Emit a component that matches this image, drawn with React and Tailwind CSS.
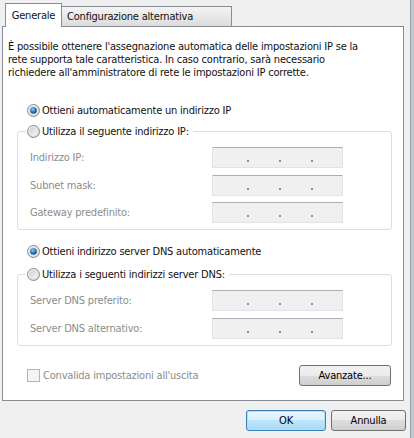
import React from 'react';

const font = { fontFamily: '"DejaVu Sans Condensed", "DejaVu Sans", Tahoma, sans-serif', fontStretch: 'condensed' };

function Radio({ checked }) {
  return (
    <svg width="13" height="13" viewBox="0 0 13 13" className="shrink-0">
      <defs>
        <linearGradient id="ro" x1="0" y1="0" x2="1" y2="1">
          <stop offset="0" stopColor="#f6f6f6" />
          <stop offset="1" stopColor="#d4d4d4" />
        </linearGradient>
        <linearGradient id="ri" x1="0" y1="0" x2="1" y2="1">
          <stop offset="0" stopColor="#cfcfcf" />
          <stop offset="1" stopColor="#f7f7f7" />
        </linearGradient>
        <radialGradient id="rd" cx="0.4" cy="0.35" r="0.7">
          <stop offset="0" stopColor="#8fd0f6" />
          <stop offset="0.5" stopColor="#2a7fc8" />
          <stop offset="1" stopColor="#0d3f78" />
        </radialGradient>
      </defs>
      <circle cx="6.5" cy="6.5" r="6" fill="url(#ro)" stroke="#8a8a8a" strokeWidth="1" />
      <circle cx="6.5" cy="6.5" r="4.2" fill="url(#ri)" />
      {checked && <circle cx="6.5" cy="6.5" r="3.3" fill="url(#rd)" />}
    </svg>
  );
}

function IpBox() {
  return (
    <div className="w-[131px] h-[21px] bg-[#f0f0f0] border border-[#e2e3ea] border-t-[#abadb3] rounded-[1px] flex items-end pb-[5px] pl-[34px] gap-[30px]">
      <div className="w-[2px] h-[2px] bg-[#8a86a8]" />
      <div className="w-[2px] h-[2px] bg-[#8a86a8]" />
      <div className="w-[2px] h-[2px] bg-[#8a86a8]" />
    </div>
  );
}

function Row({ label }) {
  return (
    <div className="flex items-center">
      <div className="w-[182px] text-[#8c8c8c]">{label}</div>
      <IpBox />
    </div>
  );
}

function Group({ legend, rows, gap }) {
  return (
    <fieldset className="ml-[14px] w-[375px] border border-[#d5dfe5] rounded-[3px] px-0 pb-[6px] m-0">
      <legend className="ml-[8px] pl-[1px] pr-[4px] flex items-center gap-[2px] leading-[13px]">
        <Radio />
        <span>{legend}</span>
      </legend>
      <div className={`pt-[9px] pl-[12px] flex flex-col ${gap}`}>
        {rows.map((r) => (
          <Row key={r} label={r} />
        ))}
      </div>
    </fieldset>
  );
}

const btn =
  'h-[21px] rounded-[3px] border flex items-center justify-center text-black';

export default function App() {
  return (
    <div className="w-[414px] h-[438px] bg-[#f0f0f0] flex text-[11px] leading-[13px] tracking-[-0.2px] text-[#111] overflow-hidden" style={font}>
      <div className="w-[410px] flex flex-col pt-[3px] pl-[2px]">
        {/* Tabs */}
        <div className="flex items-end pl-[3px] h-[23px]">
          <div className="relative z-10 -mb-px h-[24px] w-[57px] bg-white border border-b-0 border-[#898c95] flex items-start justify-center pt-[5px]">
            Generale
          </div>
          <div className="h-[20px] w-[170px] border border-l-0 border-b-0 border-[#898c95] bg-[linear-gradient(#f4f4f4,#e8e8e8_50%,#dcdcdc)] flex items-center pl-[5px]">
            Configurazione alternativa
          </div>
        </div>

        {/* Panel */}
        <div className="w-[402px] h-[375px] bg-white border border-[#898c95] flex flex-col">
          <p className="pt-[13px] pl-[5px] whitespace-nowrap">
            È possibile ottenere l'assegnazione automatica delle impostazioni IP se la
            <br />
            rete supporta tale caratteristica. In caso contrario, sarà necessario
            <br />
            richiedere all'amministratore di rete le impostazioni IP corrette.
          </p>

          <div className="mt-[25px] ml-[24px] flex items-center gap-[2px]">
            <Radio checked />
            <span>Ottieni automaticamente un indirizzo IP</span>
          </div>

          <div className="mt-[8px]">
            <Group
              legend="Utilizza il seguente indirizzo IP:"
              rows={['Indirizzo IP:', 'Subnet mask:', 'Gateway predefinito:']}
              gap="gap-[6.5px]"
            />
          </div>

          <div className="mt-[15px] ml-[24px] flex items-center gap-[2px]">
            <Radio checked />
            <span>Ottieni indirizzo server DNS automaticamente</span>
          </div>

          <div className="mt-[10px]">
            <Group
              legend="Utilizza i seguenti indirizzi server DNS:"
              rows={['Server DNS preferito:', 'Server DNS alternativo:']}
              gap="gap-[7px]"
            />
          </div>

          <div className="mt-[19px] flex items-center">
            <div className="ml-[24px] w-[13px] h-[13px] border border-[#b5b5b5] bg-[#f4f4f4]" />
            <span className="ml-[3px] text-[#8c8c8c]">Convalida impostazioni all'uscita</span>
            <div className={`${btn} ml-auto mr-[12px] w-[92px] border-[#707070] bg-[linear-gradient(#f2f2f2,#ebebeb_50%,#dddddd_50%,#cfcfcf)]`}>
              Avanzate...
            </div>
          </div>
        </div>

        {/* Bottom buttons */}
        <div className="flex justify-end gap-[5px] pr-[4px] mt-[9px]">
          <div className={`${btn} w-[80px] border-[#3c7fb1] bg-[linear-gradient(#eaf6fd,#d9f0fc_50%,#bee6fd_50%,#a7d9f5)] shadow-[inset_0_0_0_1px_#a5e4fb]`}>
            OK
          </div>
          <div className={`${btn} w-[75px] border-[#707070] bg-[linear-gradient(#f2f2f2,#ebebeb_50%,#dddddd_50%,#cfcfcf)]`}>
            Annulla
          </div>
        </div>
      </div>
      <div className="w-[4px] h-full bg-[#c0c8d2] border-l border-[#9aa3ae]" />
    </div>
  );
}
